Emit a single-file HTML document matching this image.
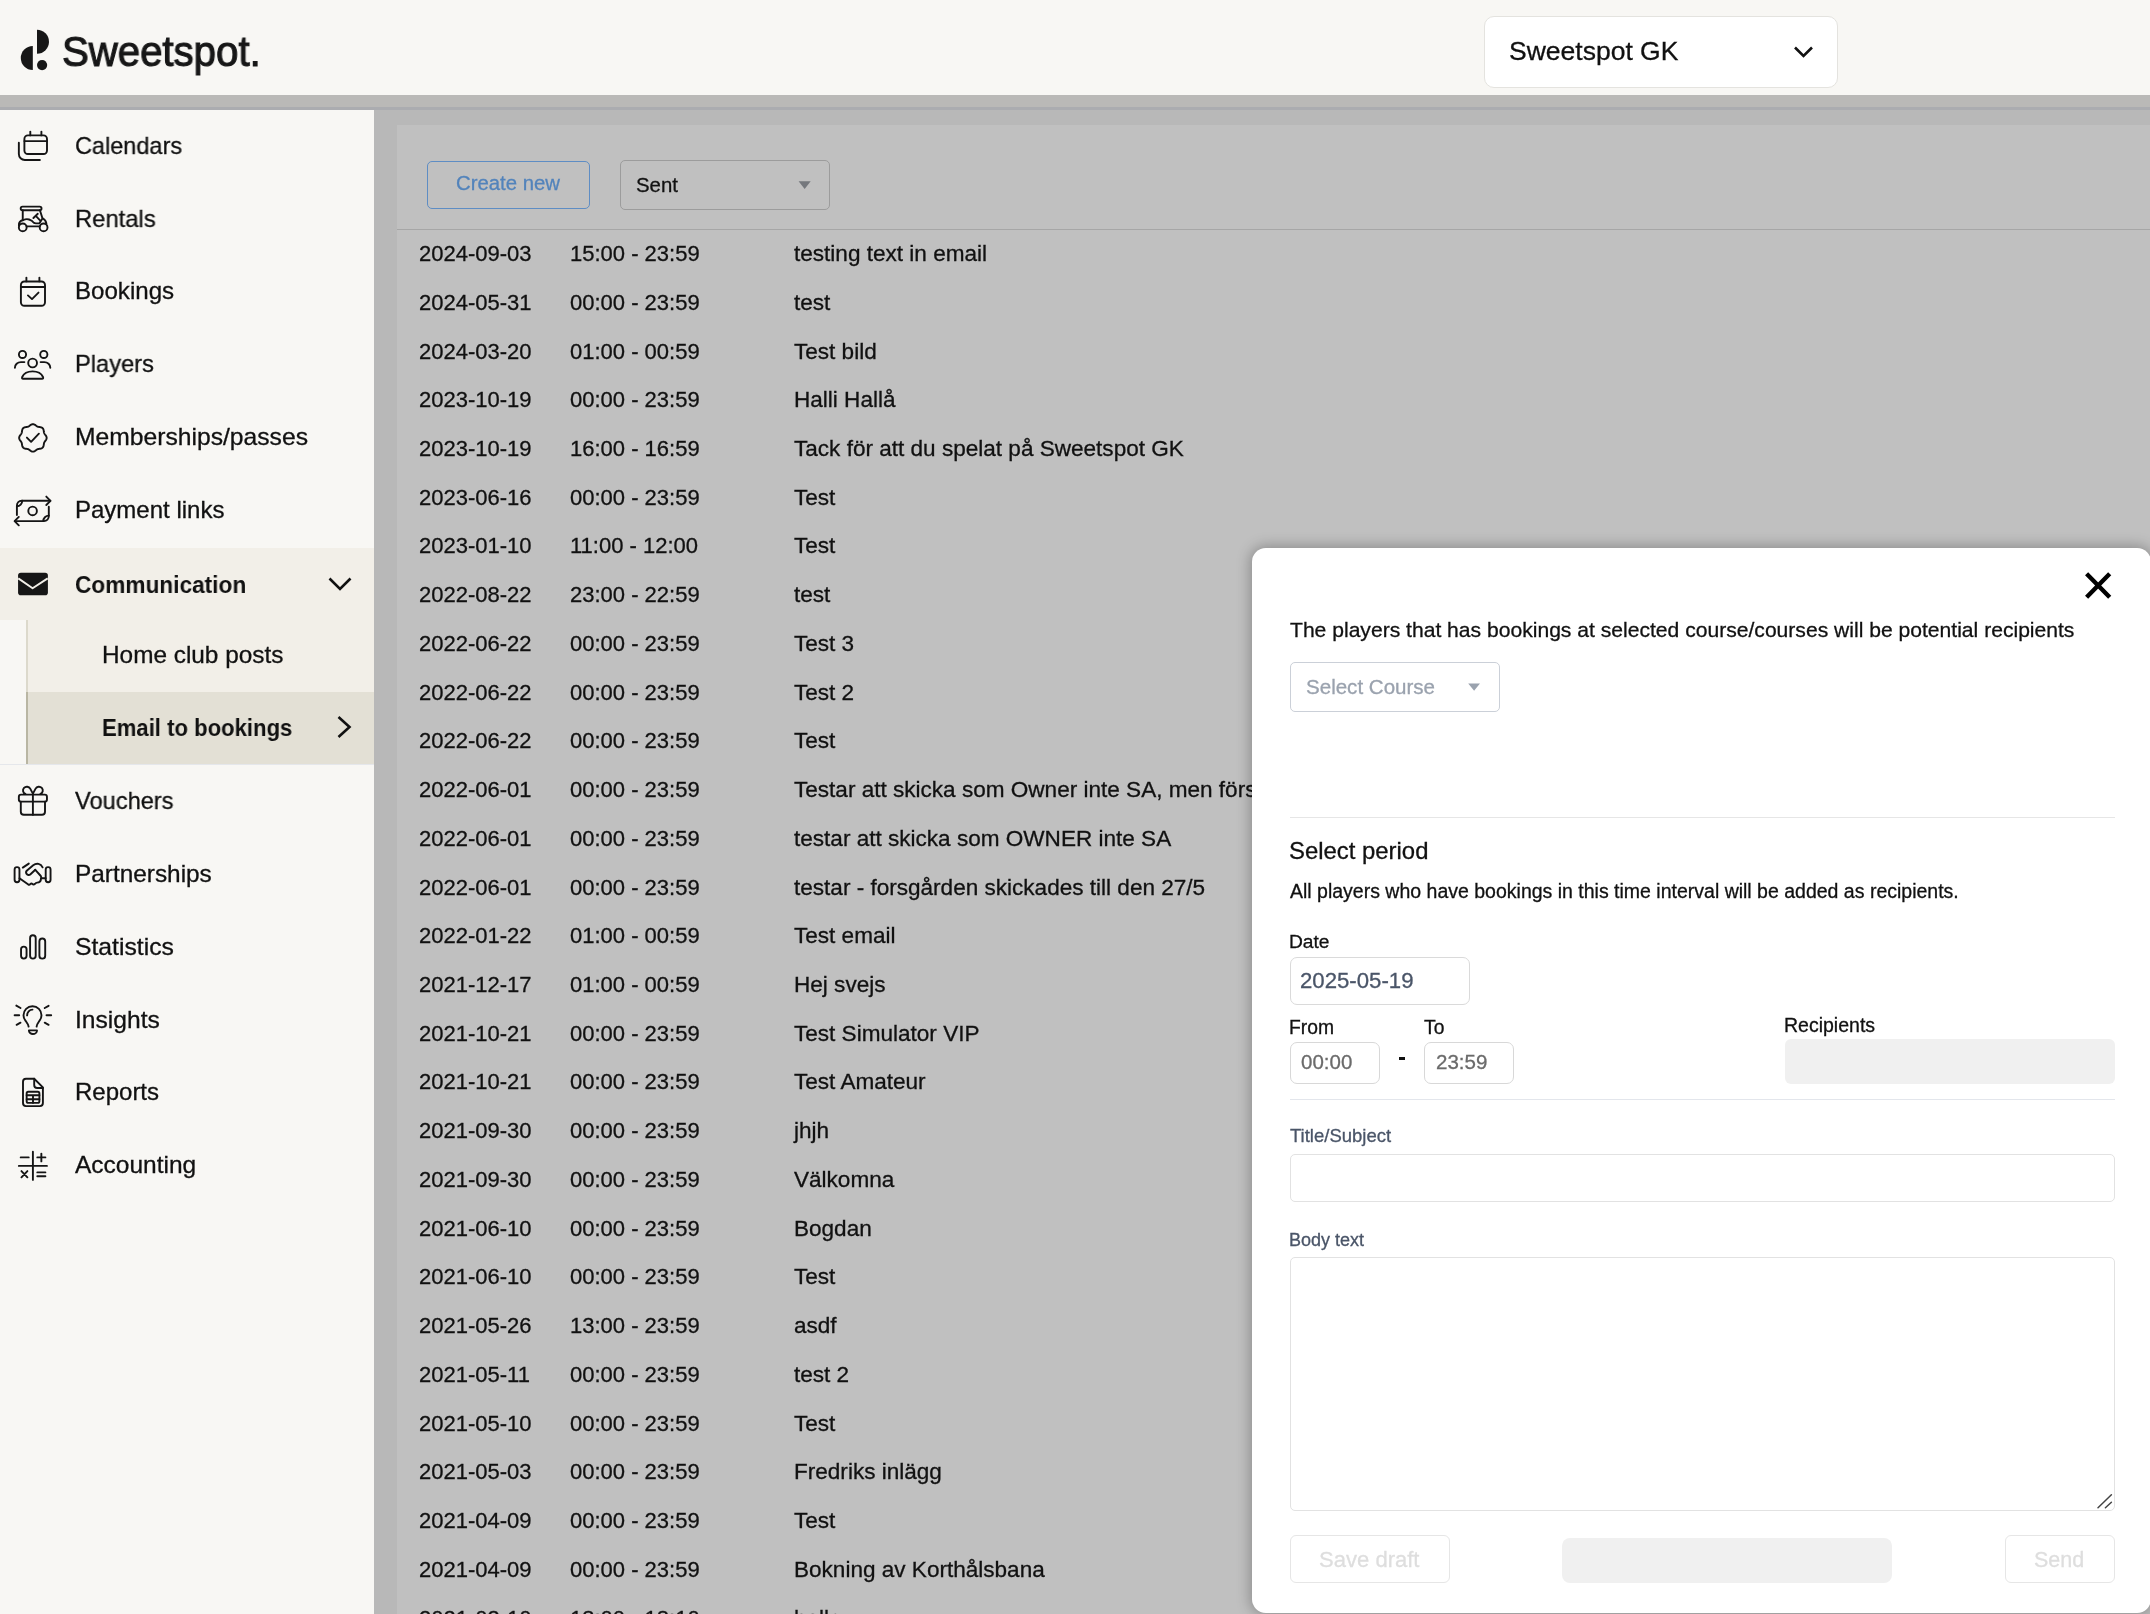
<!DOCTYPE html>
<html><head><meta charset="utf-8"><title>Sweetspot</title>
<style>
html,body{margin:0;padding:0;}
body{width:2150px;height:1614px;position:relative;overflow:hidden;background:#b8b8b8;font-family:"Liberation Sans",sans-serif;}
.t{position:absolute;white-space:pre;will-change:transform;-webkit-text-stroke:0.3px currentColor;}
.r{position:absolute;}
</style></head><body>
<div class="r" style="left:0.00px;top:0.00px;width:2150.00px;height:95.00px;background:#f8f7f4"></div>
<svg class="r" style="left:0px;top:0px;" width="60" height="80" viewBox="0 0 60 80"><path d="M37,29.8 A12,12 0 0 1 37,53.8 Z" fill="#171717"/><path d="M32.8,46.1 A12,12 0 0 0 32.8,70.1 Z" fill="#171717"/><circle cx="42.1" cy="65.1" r="5.1" fill="#171717"/></svg>
<div class="t" style="left:62.40px;top:31.32px;font-size:42.5px;line-height:42.5px;color:#171717;font-weight:400;-webkit-text-stroke:1.1px #171717;transform:scaleX(0.945);transform-origin:0 0">Sweetspot.</div>
<div class="r" style="left:1484.30px;top:16.20px;width:353.50px;height:71.40px;background:#fff;border:1px solid #e4e3df;border-radius:10px;box-sizing:border-box"></div>
<div class="t" style="left:1509.20px;top:38.27px;font-size:26.5px;line-height:26.5px;color:#111;font-weight:400;">Sweetspot GK</div>
<svg class="r" style="left:1790px;top:40px;" width="30" height="24" viewBox="0 0 30 24"><polyline points="5,7.5 13.5,16 22,7.5" fill="none" stroke="#111" stroke-width="2.6"/></svg>
<div class="r" style="left:0.00px;top:95.00px;width:2150.00px;height:12.00px;background:#bab9b7"></div>
<div class="r" style="left:0.00px;top:107.00px;width:2150.00px;height:3.00px;background:#abacb0"></div>
<div class="r" style="left:374.00px;top:110.00px;width:1776.00px;height:1504.00px;background:#b8b8b8"></div>
<div class="r" style="left:397.00px;top:125.00px;width:1753.00px;height:1489.00px;background:#c0c0c0"></div>
<div class="r" style="left:427.00px;top:161.00px;width:163.00px;height:48.00px;border:1.5px solid #5e8dc4;border-radius:5px;box-sizing:border-box"></div>
<div class="t" style="left:455.60px;top:172.67px;font-size:20.35px;line-height:20.35px;color:#5283bb;font-weight:400;">Create new</div>
<div class="r" style="left:620.00px;top:160.00px;width:210.00px;height:50.00px;border:1px solid #9c9c9c;border-radius:5px;box-sizing:border-box"></div>
<div class="t" style="left:636.40px;top:174.53px;font-size:20.4px;line-height:20.4px;color:#111;font-weight:400;">Sent</div>
<svg class="r" style="left:795px;top:178px;" width="20" height="14" viewBox="0 0 20 14"><polygon points="3.6,3.3 15.7,3.3 9.65,11" fill="#75787d"/></svg>
<div class="r" style="left:397.00px;top:228.50px;width:1753.00px;height:1.20px;background:#a6a6a6"></div>
<div class="t" style="left:419.30px;top:243.08px;font-size:22px;line-height:22px;color:#111;font-weight:400;">2024-09-03</div>
<div class="t" style="left:569.60px;top:243.08px;font-size:22px;line-height:22px;color:#111;font-weight:400;">15:00 - 23:59</div>
<div class="t" style="left:794.40px;top:243.08px;font-size:22px;line-height:22px;color:#111;font-weight:400;transform:scaleX(1.025);transform-origin:0 0">testing text in email</div>
<div class="t" style="left:419.30px;top:291.81px;font-size:22px;line-height:22px;color:#111;font-weight:400;">2024-05-31</div>
<div class="t" style="left:569.60px;top:291.81px;font-size:22px;line-height:22px;color:#111;font-weight:400;">00:00 - 23:59</div>
<div class="t" style="left:794.40px;top:291.81px;font-size:22px;line-height:22px;color:#111;font-weight:400;transform:scaleX(1.025);transform-origin:0 0">test</div>
<div class="t" style="left:419.30px;top:340.54px;font-size:22px;line-height:22px;color:#111;font-weight:400;">2024-03-20</div>
<div class="t" style="left:569.60px;top:340.54px;font-size:22px;line-height:22px;color:#111;font-weight:400;">01:00 - 00:59</div>
<div class="t" style="left:794.40px;top:340.54px;font-size:22px;line-height:22px;color:#111;font-weight:400;transform:scaleX(1.025);transform-origin:0 0">Test bild</div>
<div class="t" style="left:419.30px;top:389.27px;font-size:22px;line-height:22px;color:#111;font-weight:400;">2023-10-19</div>
<div class="t" style="left:569.60px;top:389.27px;font-size:22px;line-height:22px;color:#111;font-weight:400;">00:00 - 23:59</div>
<div class="t" style="left:794.40px;top:389.27px;font-size:22px;line-height:22px;color:#111;font-weight:400;transform:scaleX(1.025);transform-origin:0 0">Halli Hallå</div>
<div class="t" style="left:419.30px;top:438.00px;font-size:22px;line-height:22px;color:#111;font-weight:400;">2023-10-19</div>
<div class="t" style="left:569.60px;top:438.00px;font-size:22px;line-height:22px;color:#111;font-weight:400;">16:00 - 16:59</div>
<div class="t" style="left:794.40px;top:438.00px;font-size:22px;line-height:22px;color:#111;font-weight:400;transform:scaleX(1.025);transform-origin:0 0">Tack för att du spelat på Sweetspot GK</div>
<div class="t" style="left:419.30px;top:486.73px;font-size:22px;line-height:22px;color:#111;font-weight:400;">2023-06-16</div>
<div class="t" style="left:569.60px;top:486.73px;font-size:22px;line-height:22px;color:#111;font-weight:400;">00:00 - 23:59</div>
<div class="t" style="left:794.40px;top:486.73px;font-size:22px;line-height:22px;color:#111;font-weight:400;transform:scaleX(1.025);transform-origin:0 0">Test</div>
<div class="t" style="left:419.30px;top:535.46px;font-size:22px;line-height:22px;color:#111;font-weight:400;">2023-01-10</div>
<div class="t" style="left:569.60px;top:535.46px;font-size:22px;line-height:22px;color:#111;font-weight:400;">11:00 - 12:00</div>
<div class="t" style="left:794.40px;top:535.46px;font-size:22px;line-height:22px;color:#111;font-weight:400;transform:scaleX(1.025);transform-origin:0 0">Test</div>
<div class="t" style="left:419.30px;top:584.19px;font-size:22px;line-height:22px;color:#111;font-weight:400;">2022-08-22</div>
<div class="t" style="left:569.60px;top:584.19px;font-size:22px;line-height:22px;color:#111;font-weight:400;">23:00 - 22:59</div>
<div class="t" style="left:794.40px;top:584.19px;font-size:22px;line-height:22px;color:#111;font-weight:400;transform:scaleX(1.025);transform-origin:0 0">test</div>
<div class="t" style="left:419.30px;top:632.92px;font-size:22px;line-height:22px;color:#111;font-weight:400;">2022-06-22</div>
<div class="t" style="left:569.60px;top:632.92px;font-size:22px;line-height:22px;color:#111;font-weight:400;">00:00 - 23:59</div>
<div class="t" style="left:794.40px;top:632.92px;font-size:22px;line-height:22px;color:#111;font-weight:400;transform:scaleX(1.025);transform-origin:0 0">Test 3</div>
<div class="t" style="left:419.30px;top:681.65px;font-size:22px;line-height:22px;color:#111;font-weight:400;">2022-06-22</div>
<div class="t" style="left:569.60px;top:681.65px;font-size:22px;line-height:22px;color:#111;font-weight:400;">00:00 - 23:59</div>
<div class="t" style="left:794.40px;top:681.65px;font-size:22px;line-height:22px;color:#111;font-weight:400;transform:scaleX(1.025);transform-origin:0 0">Test 2</div>
<div class="t" style="left:419.30px;top:730.38px;font-size:22px;line-height:22px;color:#111;font-weight:400;">2022-06-22</div>
<div class="t" style="left:569.60px;top:730.38px;font-size:22px;line-height:22px;color:#111;font-weight:400;">00:00 - 23:59</div>
<div class="t" style="left:794.40px;top:730.38px;font-size:22px;line-height:22px;color:#111;font-weight:400;transform:scaleX(1.025);transform-origin:0 0">Test</div>
<div class="t" style="left:419.30px;top:779.11px;font-size:22px;line-height:22px;color:#111;font-weight:400;">2022-06-01</div>
<div class="t" style="left:569.60px;top:779.11px;font-size:22px;line-height:22px;color:#111;font-weight:400;">00:00 - 23:59</div>
<div class="t" style="left:794.40px;top:779.11px;font-size:22px;line-height:22px;color:#111;font-weight:400;transform:scaleX(1.025);transform-origin:0 0">Testar att skicka som Owner inte SA, men första gången</div>
<div class="t" style="left:419.30px;top:827.84px;font-size:22px;line-height:22px;color:#111;font-weight:400;">2022-06-01</div>
<div class="t" style="left:569.60px;top:827.84px;font-size:22px;line-height:22px;color:#111;font-weight:400;">00:00 - 23:59</div>
<div class="t" style="left:794.40px;top:827.84px;font-size:22px;line-height:22px;color:#111;font-weight:400;transform:scaleX(1.025);transform-origin:0 0">testar att skicka som OWNER inte SA</div>
<div class="t" style="left:419.30px;top:876.57px;font-size:22px;line-height:22px;color:#111;font-weight:400;">2022-06-01</div>
<div class="t" style="left:569.60px;top:876.57px;font-size:22px;line-height:22px;color:#111;font-weight:400;">00:00 - 23:59</div>
<div class="t" style="left:794.40px;top:876.57px;font-size:22px;line-height:22px;color:#111;font-weight:400;transform:scaleX(1.025);transform-origin:0 0">testar - forsgården skickades till den 27/5</div>
<div class="t" style="left:419.30px;top:925.30px;font-size:22px;line-height:22px;color:#111;font-weight:400;">2022-01-22</div>
<div class="t" style="left:569.60px;top:925.30px;font-size:22px;line-height:22px;color:#111;font-weight:400;">01:00 - 00:59</div>
<div class="t" style="left:794.40px;top:925.30px;font-size:22px;line-height:22px;color:#111;font-weight:400;transform:scaleX(1.025);transform-origin:0 0">Test email</div>
<div class="t" style="left:419.30px;top:974.03px;font-size:22px;line-height:22px;color:#111;font-weight:400;">2021-12-17</div>
<div class="t" style="left:569.60px;top:974.03px;font-size:22px;line-height:22px;color:#111;font-weight:400;">01:00 - 00:59</div>
<div class="t" style="left:794.40px;top:974.03px;font-size:22px;line-height:22px;color:#111;font-weight:400;transform:scaleX(1.025);transform-origin:0 0">Hej svejs</div>
<div class="t" style="left:419.30px;top:1022.76px;font-size:22px;line-height:22px;color:#111;font-weight:400;">2021-10-21</div>
<div class="t" style="left:569.60px;top:1022.76px;font-size:22px;line-height:22px;color:#111;font-weight:400;">00:00 - 23:59</div>
<div class="t" style="left:794.40px;top:1022.76px;font-size:22px;line-height:22px;color:#111;font-weight:400;transform:scaleX(1.025);transform-origin:0 0">Test Simulator VIP</div>
<div class="t" style="left:419.30px;top:1071.49px;font-size:22px;line-height:22px;color:#111;font-weight:400;">2021-10-21</div>
<div class="t" style="left:569.60px;top:1071.49px;font-size:22px;line-height:22px;color:#111;font-weight:400;">00:00 - 23:59</div>
<div class="t" style="left:794.40px;top:1071.49px;font-size:22px;line-height:22px;color:#111;font-weight:400;transform:scaleX(1.025);transform-origin:0 0">Test Amateur</div>
<div class="t" style="left:419.30px;top:1120.22px;font-size:22px;line-height:22px;color:#111;font-weight:400;">2021-09-30</div>
<div class="t" style="left:569.60px;top:1120.22px;font-size:22px;line-height:22px;color:#111;font-weight:400;">00:00 - 23:59</div>
<div class="t" style="left:794.40px;top:1120.22px;font-size:22px;line-height:22px;color:#111;font-weight:400;transform:scaleX(1.025);transform-origin:0 0">jhjh</div>
<div class="t" style="left:419.30px;top:1168.95px;font-size:22px;line-height:22px;color:#111;font-weight:400;">2021-09-30</div>
<div class="t" style="left:569.60px;top:1168.95px;font-size:22px;line-height:22px;color:#111;font-weight:400;">00:00 - 23:59</div>
<div class="t" style="left:794.40px;top:1168.95px;font-size:22px;line-height:22px;color:#111;font-weight:400;transform:scaleX(1.025);transform-origin:0 0">Välkomna</div>
<div class="t" style="left:419.30px;top:1217.68px;font-size:22px;line-height:22px;color:#111;font-weight:400;">2021-06-10</div>
<div class="t" style="left:569.60px;top:1217.68px;font-size:22px;line-height:22px;color:#111;font-weight:400;">00:00 - 23:59</div>
<div class="t" style="left:794.40px;top:1217.68px;font-size:22px;line-height:22px;color:#111;font-weight:400;transform:scaleX(1.025);transform-origin:0 0">Bogdan</div>
<div class="t" style="left:419.30px;top:1266.41px;font-size:22px;line-height:22px;color:#111;font-weight:400;">2021-06-10</div>
<div class="t" style="left:569.60px;top:1266.41px;font-size:22px;line-height:22px;color:#111;font-weight:400;">00:00 - 23:59</div>
<div class="t" style="left:794.40px;top:1266.41px;font-size:22px;line-height:22px;color:#111;font-weight:400;transform:scaleX(1.025);transform-origin:0 0">Test</div>
<div class="t" style="left:419.30px;top:1315.14px;font-size:22px;line-height:22px;color:#111;font-weight:400;">2021-05-26</div>
<div class="t" style="left:569.60px;top:1315.14px;font-size:22px;line-height:22px;color:#111;font-weight:400;">13:00 - 23:59</div>
<div class="t" style="left:794.40px;top:1315.14px;font-size:22px;line-height:22px;color:#111;font-weight:400;transform:scaleX(1.025);transform-origin:0 0">asdf</div>
<div class="t" style="left:419.30px;top:1363.87px;font-size:22px;line-height:22px;color:#111;font-weight:400;">2021-05-11</div>
<div class="t" style="left:569.60px;top:1363.87px;font-size:22px;line-height:22px;color:#111;font-weight:400;">00:00 - 23:59</div>
<div class="t" style="left:794.40px;top:1363.87px;font-size:22px;line-height:22px;color:#111;font-weight:400;transform:scaleX(1.025);transform-origin:0 0">test 2</div>
<div class="t" style="left:419.30px;top:1412.60px;font-size:22px;line-height:22px;color:#111;font-weight:400;">2021-05-10</div>
<div class="t" style="left:569.60px;top:1412.60px;font-size:22px;line-height:22px;color:#111;font-weight:400;">00:00 - 23:59</div>
<div class="t" style="left:794.40px;top:1412.60px;font-size:22px;line-height:22px;color:#111;font-weight:400;transform:scaleX(1.025);transform-origin:0 0">Test</div>
<div class="t" style="left:419.30px;top:1461.33px;font-size:22px;line-height:22px;color:#111;font-weight:400;">2021-05-03</div>
<div class="t" style="left:569.60px;top:1461.33px;font-size:22px;line-height:22px;color:#111;font-weight:400;">00:00 - 23:59</div>
<div class="t" style="left:794.40px;top:1461.33px;font-size:22px;line-height:22px;color:#111;font-weight:400;transform:scaleX(1.025);transform-origin:0 0">Fredriks inlägg</div>
<div class="t" style="left:419.30px;top:1510.06px;font-size:22px;line-height:22px;color:#111;font-weight:400;">2021-04-09</div>
<div class="t" style="left:569.60px;top:1510.06px;font-size:22px;line-height:22px;color:#111;font-weight:400;">00:00 - 23:59</div>
<div class="t" style="left:794.40px;top:1510.06px;font-size:22px;line-height:22px;color:#111;font-weight:400;transform:scaleX(1.025);transform-origin:0 0">Test</div>
<div class="t" style="left:419.30px;top:1558.79px;font-size:22px;line-height:22px;color:#111;font-weight:400;">2021-04-09</div>
<div class="t" style="left:569.60px;top:1558.79px;font-size:22px;line-height:22px;color:#111;font-weight:400;">00:00 - 23:59</div>
<div class="t" style="left:794.40px;top:1558.79px;font-size:22px;line-height:22px;color:#111;font-weight:400;transform:scaleX(1.025);transform-origin:0 0">Bokning av Korthålsbana</div>
<div class="t" style="left:419.30px;top:1607.52px;font-size:22px;line-height:22px;color:#111;font-weight:400;">2021-03-10</div>
<div class="t" style="left:569.60px;top:1607.52px;font-size:22px;line-height:22px;color:#111;font-weight:400;">18:00 - 18:10</div>
<div class="t" style="left:794.40px;top:1607.52px;font-size:22px;line-height:22px;color:#111;font-weight:400;transform:scaleX(1.025);transform-origin:0 0">hallo</div>
<div class="r" style="left:0.00px;top:110.00px;width:374.00px;height:1504.00px;background:#f8f7f4"></div>
<div class="r" style="left:0.00px;top:548.00px;width:374.00px;height:216.00px;background:#f2efe8"></div>
<div class="r" style="left:26.00px;top:620.00px;width:348.00px;height:72.00px;background:#f2efe8"></div>
<div class="r" style="left:26.00px;top:692.00px;width:348.00px;height:72.00px;background:#e3e0d5"></div>
<div class="r" style="left:0.00px;top:620.00px;width:26.00px;height:144.00px;background:#f8f7f4"></div>
<div class="r" style="left:26.00px;top:620.00px;width:2.00px;height:72.00px;background:#dcd9cc"></div>
<div class="r" style="left:26.00px;top:692.00px;width:2.00px;height:72.00px;background:#b9b6a3"></div>
<div class="r" style="left:0.00px;top:764.00px;width:374.00px;height:1.00px;background:#e5e7eb"></div>
<div class="t" style="left:74.90px;top:133.68px;font-size:24px;line-height:24px;color:#111;font-weight:400;transform:scaleX(0.9783);transform-origin:0 0">Calendars</div>
<div class="t" style="left:74.90px;top:206.50px;font-size:24px;line-height:24px;color:#111;font-weight:400;transform:scaleX(0.9912);transform-origin:0 0">Rentals</div>
<div class="t" style="left:74.90px;top:279.32px;font-size:24px;line-height:24px;color:#111;font-weight:400;transform:scaleX(1.0039);transform-origin:0 0">Bookings</div>
<div class="t" style="left:74.90px;top:352.14px;font-size:24px;line-height:24px;color:#111;font-weight:400;transform:scaleX(0.9862);transform-origin:0 0">Players</div>
<div class="t" style="left:74.90px;top:424.96px;font-size:24px;line-height:24px;color:#111;font-weight:400;transform:scaleX(1.0275);transform-origin:0 0">Memberships/passes</div>
<div class="t" style="left:74.90px;top:497.78px;font-size:24px;line-height:24px;color:#111;font-weight:400;transform:scaleX(1.0003);transform-origin:0 0">Payment links</div>
<div class="t" style="left:74.90px;top:572.60px;font-size:24px;line-height:24px;color:#111;font-weight:700;transform:scaleX(0.9441);transform-origin:0 0;-webkit-text-stroke:0">Communication</div>
<div class="t" style="left:102.30px;top:643.42px;font-size:24px;line-height:24px;color:#111;font-weight:400;transform:scaleX(1.0147);transform-origin:0 0">Home club posts</div>
<div class="t" style="left:102.30px;top:716.24px;font-size:24px;line-height:24px;color:#111;font-weight:700;transform:scaleX(0.9208);transform-origin:0 0;-webkit-text-stroke:0">Email to bookings</div>
<div class="t" style="left:74.90px;top:789.06px;font-size:24px;line-height:24px;color:#111;font-weight:400;transform:scaleX(0.9845);transform-origin:0 0">Vouchers</div>
<div class="t" style="left:74.90px;top:861.88px;font-size:24px;line-height:24px;color:#111;font-weight:400;transform:scaleX(1.0153);transform-origin:0 0">Partnerships</div>
<div class="t" style="left:74.90px;top:934.70px;font-size:24px;line-height:24px;color:#111;font-weight:400;transform:scaleX(1.0305);transform-origin:0 0">Statistics</div>
<div class="t" style="left:74.90px;top:1007.52px;font-size:24px;line-height:24px;color:#111;font-weight:400;transform:scaleX(1.0258);transform-origin:0 0">Insights</div>
<div class="t" style="left:74.90px;top:1080.34px;font-size:24px;line-height:24px;color:#111;font-weight:400;transform:scaleX(0.9972);transform-origin:0 0">Reports</div>
<div class="t" style="left:74.90px;top:1153.16px;font-size:24px;line-height:24px;color:#111;font-weight:400;transform:scaleX(1.0206);transform-origin:0 0">Accounting</div>
<svg class="r" style="left:320px;top:570px;" width="40" height="30" viewBox="0 0 40 30"><polyline points="9.5,8.5 20,19 30.5,8.5" fill="none" stroke="#111" stroke-width="2.6"/></svg>
<svg class="r" style="left:330px;top:710px;" width="30" height="34" viewBox="0 0 30 34"><polyline points="8.5,7 19.5,17 8.5,27" fill="none" stroke="#111" stroke-width="2.6"/></svg>
<svg class="r" style="left:0;top:0" width="374" height="1614" viewBox="0 0 374 1614"><g fill="none" stroke="#151515" stroke-width="1.9" stroke-linecap="round" stroke-linejoin="round"><path d="M30.3,131.6 V135.4 M41.4,131.6 V135.4"/><rect x="24.4" y="135.4" width="22.6" height="18.6" rx="3.5"/><path d="M24.4,141.1 H47"/><path d="M18.85,142.7 V154 a6,6 0 0 0 6,6 H39.9"/><rect x="20.7" y="206.6" width="20.8" height="3.6" rx="1.8"/><path d="M22.75,210.2 V220.2"/><path d="M39.9,210.2 L42.3,217.8"/><path d="M18.9,225.5 C18.6,222 21,220.5 23.5,220 C27,218.2 31.5,219.5 33.8,222.8 C34.5,223.4 35,223.4 36,223.4 H39.3 L42.6,218.2 C45,219.6 46.3,221.6 46.4,223.8"/><circle cx="22.75" cy="227.4" r="3.9"/><circle cx="43.6" cy="227.4" r="3.9"/><path d="M26.65,226.4 H39.7"/><path d="M33.4,218 L37.8,213.8 M36,216.2 L40.3,220.6"/><path d="M26.4,277.6 V281.4 M39.4,277.6 V281.4"/><rect x="20.9" y="281.45" width="24.1" height="24.35" rx="3.5"/><path d="M20.9,287 H45"/><path d="M27.95,295.4 L32,299.1 L38.5,292.6"/><circle cx="22.5" cy="354.45" r="3.6"/><circle cx="43.8" cy="354.45" r="3.6"/><circle cx="32.6" cy="363" r="4.4"/><path d="M24.4,362.1 H21 C17.5,362.1 14.9,364.6 14.9,367.7"/><path d="M40.6,362.1 H44.2 C47.7,362.1 50.3,364.6 50.3,367.7"/><path d="M23.2,378.8 C22,378.8 21.8,378 22.2,377 C24,373 27.5,371.4 32.6,371.4 C37.7,371.4 41.2,373 43,377 C43.4,378 43.2,378.8 42,378.8 Z"/><path d="M46.65,437.90 L46.60,438.44 L46.46,438.97 L46.25,439.48 L45.97,439.97 L45.65,440.44 L45.32,440.88 L44.99,441.31 L44.69,441.73 L44.43,442.15 L44.22,442.59 L44.06,443.04 L43.94,443.53 L43.86,444.04 L43.79,444.57 L43.71,445.12 L43.60,445.68 L43.46,446.22 L43.25,446.74 L42.97,447.21 L42.62,447.62 L42.21,447.97 L41.74,448.25 L41.22,448.46 L40.68,448.60 L40.12,448.71 L39.57,448.79 L39.04,448.86 L38.53,448.94 L38.04,449.06 L37.59,449.22 L37.15,449.43 L36.73,449.69 L36.31,449.99 L35.88,450.32 L35.44,450.65 L34.97,450.97 L34.48,451.25 L33.97,451.46 L33.44,451.60 L32.90,451.65 L32.36,451.60 L31.83,451.46 L31.32,451.25 L30.83,450.97 L30.36,450.65 L29.92,450.32 L29.49,449.99 L29.07,449.69 L28.65,449.43 L28.21,449.22 L27.76,449.06 L27.27,448.94 L26.76,448.86 L26.23,448.79 L25.68,448.71 L25.12,448.60 L24.58,448.46 L24.06,448.25 L23.59,447.97 L23.18,447.62 L22.83,447.21 L22.55,446.74 L22.34,446.22 L22.20,445.68 L22.09,445.12 L22.01,444.57 L21.94,444.04 L21.86,443.53 L21.74,443.04 L21.58,442.59 L21.37,442.15 L21.11,441.73 L20.81,441.31 L20.48,440.88 L20.15,440.44 L19.83,439.97 L19.55,439.48 L19.34,438.97 L19.20,438.44 L19.15,437.90 L19.20,437.36 L19.34,436.83 L19.55,436.32 L19.83,435.83 L20.15,435.36 L20.48,434.92 L20.81,434.49 L21.11,434.07 L21.37,433.65 L21.58,433.21 L21.74,432.76 L21.86,432.27 L21.94,431.76 L22.01,431.23 L22.09,430.68 L22.20,430.12 L22.34,429.58 L22.55,429.06 L22.83,428.59 L23.18,428.18 L23.59,427.83 L24.06,427.55 L24.58,427.34 L25.12,427.20 L25.68,427.09 L26.23,427.01 L26.76,426.94 L27.27,426.86 L27.76,426.74 L28.21,426.58 L28.65,426.37 L29.07,426.11 L29.49,425.81 L29.92,425.48 L30.36,425.15 L30.83,424.83 L31.32,424.55 L31.83,424.34 L32.36,424.20 L32.90,424.15 L33.44,424.20 L33.97,424.34 L34.48,424.55 L34.97,424.83 L35.44,425.15 L35.88,425.48 L36.31,425.81 L36.73,426.11 L37.15,426.37 L37.59,426.58 L38.04,426.74 L38.53,426.86 L39.04,426.94 L39.57,427.01 L40.12,427.09 L40.68,427.20 L41.22,427.34 L41.74,427.55 L42.21,427.83 L42.62,428.18 L42.97,428.59 L43.25,429.06 L43.46,429.58 L43.60,430.12 L43.71,430.68 L43.79,431.23 L43.86,431.76 L43.94,432.27 L44.06,432.76 L44.22,433.21 L44.43,433.65 L44.69,434.07 L44.99,434.49 L45.32,434.92 L45.65,435.36 L45.97,435.83 L46.25,436.32 L46.46,436.83 L46.60,437.36 L46.65,437.90 Z"/><path d="M26.9,437.6 L31.1,441.8 L38.9,433.7"/><path d="M16.9,515 V505.8 C16.9,503 18.9,500.8 21.7,500.8 H50.3"/><path d="M46.3,496.6 L50.5,500.8 L46.3,505"/><path d="M48.8,506.7 V516.1 C48.8,518.9 46.8,521.1 44,521.1 H15"/><path d="M18.8,516.9 L14.6,521.1 L18.8,525.3"/><path d="M16.9,506.2 A5.3,5.3 0 0 0 22.2,500.8"/><path d="M43.3,521.1 A5.5,5.5 0 0 1 48.8,515.6"/><circle cx="32.6" cy="510.9" r="4.3"/><rect x="18.85" y="794.6" width="28.1" height="7" rx="2.2"/><path d="M20.8,801.6 V811.8 C20.8,813.5 22,814.8 23.8,814.8 H42 C43.8,814.8 45,813.5 45,811.8 V801.6"/><path d="M32.9,794 V814.8"/><path d="M25.4,794 C22.8,793 22.3,789.8 24,787.9 C25.8,786 29,786.4 30.2,788.6 L32.9,793.6 L35.6,788.6 C36.8,786.4 40,786 41.8,787.9 C43.5,789.8 43,793 40.4,794"/><rect x="14.6" y="867.1" width="4.85" height="15.1" rx="2.4"/><rect x="45.7" y="867.1" width="4.85" height="15.1" rx="2.4"/><path d="M19.45,878.3 L28.3,884.6 C29,885 29.8,884.8 30.4,884 C31,883.4 31.8,883.4 32.4,884 C33.2,884.8 34.5,884.6 35.2,883.7 C35.6,883 36.2,882.6 37,882.6 C39.5,882.6 41,880.8 41,878.3 H45.7"/><path d="M22.8,867.6 L28.8,863.6"/><path d="M35.3,869.8 L30.5,874.2 C29.3,875.3 27.5,875.2 26.6,873.9 C25.8,872.8 26,871.4 27,870.5 L33.2,865.3 C36.6,862.6 40.8,863.5 42.6,867.3"/><path d="M35.3,869.8 L40.8,876 C41.5,877 41.3,878 41,878.3"/><rect x="21.05" y="946.6" width="5.5" height="12" rx="2.75"/><rect x="30.1" y="935.2" width="5.6" height="23.4" rx="2.8"/><rect x="39.4" y="938.5" width="5.8" height="20.1" rx="2.9"/><path d="M28.6,1026.6 C28.3,1024 26.5,1022.3 25.2,1020.3 C24.2,1018.8 23.5,1017 23.5,1015.2 C23.5,1010.2 27.5,1006.2 32.5,1006.2 C37.5,1006.2 41.5,1010.2 41.5,1015.2 C41.5,1017 40.8,1018.8 39.8,1020.3 C38.5,1022.3 36.9,1024 36.6,1026.6"/><path d="M27.1,1015.4 C27.1,1012.2 29.5,1009.6 32.5,1009.6"/><path d="M28.9,1030.4 H37 C37,1032.5 35,1034 32.9,1034 C30.8,1034 28.9,1032.5 28.9,1030.4 Z"/><path d="M16.3,1005.6 L20.5,1008 M14.6,1015.2 H19.2 M16.6,1024.8 L20.5,1022.7 M44.7,1008 L48.6,1005.8 M46.5,1015.2 H51.2 M44.7,1022.7 L48.6,1024.8"/><path d="M34.2,1078.8 H26 C24.3,1078.8 23,1080.1 23,1081.8 V1103.1 C23,1104.8 24.3,1106.1 26,1106.1 H39.9 C41.6,1106.1 42.9,1104.8 42.9,1103.1 V1087.4 L34.2,1078.8"/><path d="M34.2,1078.8 V1085 C34.2,1086.7 35.5,1088 37.2,1088 H42.9"/><rect x="26.65" y="1091.8" width="12.75" height="11.1" rx="1.6"/><path d="M26.65,1095.3 H39.4 M26.65,1099.2 H39.4 M33,1095.3 V1102.9"/><path d="M32.9,1151.8 V1179.9 M18.85,1165.9 H46.95 M20.7,1157.4 H28.7 M37.3,1157.4 H45.4 M41.35,1153.6 V1161.4 M21.45,1171.1 L27.4,1177.3 M27.4,1171.1 L21.45,1177.3 M37.3,1172.4 H45.4 M37.3,1176.3 H45.4"/></g><rect x="18.07" y="572.8" width="29.83" height="22.4" rx="2.8" fill="#161616"/><path d="M18.3,578.4 L32.6,588.3 L47.7,578.4" fill="none" stroke="#f2efe8" stroke-width="1.9" stroke-linejoin="round"/></svg>
<div class="r" style="left:1252.00px;top:548.00px;width:899.00px;height:1065.00px;background:#fff;border-radius:14px;box-shadow:0 0 14px 2px rgba(0,0,0,0.28)"></div>
<svg class="r" style="left:2080px;top:568px;" width="36" height="36" viewBox="0 0 36 36"><path d="M6.6,5.7 L29.7,29.2 M29.7,5.7 L6.6,29.2" stroke="#000" stroke-width="4.4" fill="none"/></svg>
<div class="t" style="left:1290.00px;top:619.14px;font-size:21.1px;line-height:21.1px;color:#111;font-weight:400;">The players that has bookings at selected course/courses will be potential recipients</div>
<div class="r" style="left:1290.00px;top:662.00px;width:210.00px;height:50.00px;border:1.5px solid #cbd0d8;border-radius:5px;box-sizing:border-box"></div>
<div class="t" style="left:1305.60px;top:676.50px;font-size:20.55px;line-height:20.55px;color:#9aa2ae;font-weight:400;">Select Course</div>
<svg class="r" style="left:1464px;top:680px;" width="20" height="14" viewBox="0 0 20 14"><polygon points="4.2,3.6 16,3.6 10.1,10.8" fill="#9aa2ae"/></svg>
<div class="r" style="left:1290.00px;top:816.50px;width:825.00px;height:1.20px;background:#e6e6e6"></div>
<div class="t" style="left:1289.00px;top:838.97px;font-size:23.9px;line-height:23.9px;color:#111;font-weight:400;">Select period</div>
<div class="t" style="left:1290.00px;top:882.29px;font-size:19.5px;line-height:19.5px;color:#111;font-weight:400;">All players who have bookings in this time interval will be added as recipients.</div>
<div class="t" style="left:1289.00px;top:931.75px;font-size:19.2px;line-height:19.2px;color:#111;font-weight:400;">Date</div>
<div class="r" style="left:1290.00px;top:957.00px;width:180.00px;height:48.00px;border:1px solid #dadada;border-radius:7px;box-sizing:border-box"></div>
<div class="t" style="left:1299.60px;top:970.01px;font-size:22.2px;line-height:22.2px;color:#4a5568;font-weight:400;">2025-05-19</div>
<div class="t" style="left:1289.40px;top:1018.26px;font-size:19.3px;line-height:19.3px;color:#111;font-weight:400;">From</div>
<div class="t" style="left:1423.60px;top:1018.26px;font-size:19.3px;line-height:19.3px;color:#111;font-weight:400;">To</div>
<div class="r" style="left:1290.00px;top:1042.00px;width:90.00px;height:42.00px;border:1px solid #d8d8d8;border-radius:7px;box-sizing:border-box"></div>
<div class="t" style="left:1301.00px;top:1051.85px;font-size:20.5px;line-height:20.5px;color:#6b6b6b;font-weight:400;">00:00</div>
<div class="r" style="left:1398.80px;top:1057.20px;width:6.20px;height:3.20px;background:#111"></div>
<div class="r" style="left:1424.00px;top:1042.00px;width:90.00px;height:42.00px;border:1px solid #d8d8d8;border-radius:7px;box-sizing:border-box"></div>
<div class="t" style="left:1435.70px;top:1051.85px;font-size:20.5px;line-height:20.5px;color:#6b6b6b;font-weight:400;">23:59</div>
<div class="t" style="left:1784.00px;top:1015.89px;font-size:19.5px;line-height:19.5px;color:#111;font-weight:400;">Recipients</div>
<div class="r" style="left:1785.00px;top:1039.00px;width:330.00px;height:45.00px;background:#f0f0f0;border-radius:6px"></div>
<div class="r" style="left:1290.00px;top:1099.00px;width:825.00px;height:1.20px;background:#e3e6ec"></div>
<div class="t" style="left:1290.00px;top:1126.74px;font-size:18.5px;line-height:18.5px;color:#4a5568;font-weight:400;">Title/Subject</div>
<div class="r" style="left:1290.00px;top:1154.00px;width:825.00px;height:48.00px;border:1.5px solid #e2e2e2;border-radius:5px;box-sizing:border-box"></div>
<div class="t" style="left:1289.20px;top:1230.96px;font-size:18.0px;line-height:18.0px;color:#4a5568;font-weight:400;">Body text</div>
<div class="r" style="left:1290.00px;top:1257.00px;width:825.00px;height:254.00px;border:1.5px solid #e2e2e2;border-radius:5px;box-sizing:border-box"></div>
<svg class="r" style="left:2094px;top:1490px;" width="22" height="22" viewBox="0 0 22 22"><path d="M4,17.8 L17.4,4.8 M11.4,17.8 L17.4,12.2" stroke="#444" stroke-width="1.5" stroke-linecap="round" fill="none"/></svg>
<div class="r" style="left:1290.00px;top:1535.00px;width:160.00px;height:48.00px;border:1.5px solid #e6e6e6;border-radius:6px;box-sizing:border-box"></div>
<div class="t" style="left:1319.40px;top:1549.23px;font-size:22.05px;line-height:22.05px;color:#dedede;font-weight:400;">Save draft</div>
<div class="r" style="left:1562.00px;top:1538.00px;width:330.00px;height:45.00px;background:#f0f0f0;border-radius:8px"></div>
<div class="r" style="left:2005.00px;top:1535.00px;width:110.00px;height:48.00px;border:1.5px solid #e6e6e6;border-radius:6px;box-sizing:border-box"></div>
<div class="t" style="left:2034.00px;top:1549.60px;font-size:21.5px;line-height:21.5px;color:#dedede;font-weight:400;">Send</div>
</body></html>
